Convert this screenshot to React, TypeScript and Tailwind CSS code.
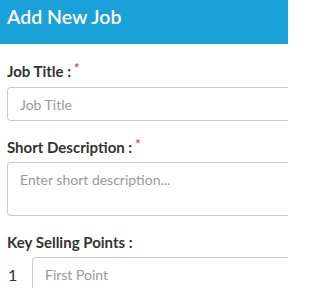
export default function App() {
    return (
        <div className="w-[288px] h-[288px] overflow-hidden bg-white font-['Lato',sans-serif] text-[#333]">
            <div className="h-[44px] bg-[#1ba1da] px-[7px] pt-[7px]">
                <h1 className="text-[19.5px] font-semibold text-white leading-none">Add New Job</h1>
            </div>

            <div className="pl-[7px] pt-[17px]">
                <label className="block text-[15px] font-bold leading-[21px] mb-[5px]">
                    Job Title :<span className="relative -top-[3px] text-[#d9534f] text-[13px] align-top ml-[3px]">*</span>
                </label>
                <input
                    className="block w-full h-[34px] border border-r-0 border-[#ccc] rounded-l-[4px] px-[12px] text-[14px] placeholder:text-[#999] outline-none"
                    placeholder="Job Title"
                />

                <label className="block text-[15px] font-bold leading-[21px] mt-[16px] mb-[4px]">
                    Short Description :<span className="relative -top-[3px] text-[#d9534f] text-[13px] align-top ml-[3px]">*</span>
                </label>
                <textarea
                    className="block w-full h-[54px] border border-r-0 border-[#ccc] rounded-l-[4px] px-[12px] py-[6px] text-[14px] placeholder:text-[#999] outline-none resize-none"
                    placeholder="Enter short description..."
                />

                <label className="block text-[15px] font-bold leading-[21px] mt-[16px] mb-[4px]">
                    Key Selling Points :
                </label>
                <div className="flex items-start">
                    <span className="w-[25px] text-[16px] leading-[34px] pl-[1px] pt-[1px]">1</span>
                    <input
                        className="flex-1 min-w-0 h-[34px] border border-r-0 border-[#ccc] rounded-l-[4px] px-[12px] text-[14px] placeholder:text-[#999] outline-none"
                        placeholder="First Point"
                    />
                </div>
            </div>
        </div>
    );
}
